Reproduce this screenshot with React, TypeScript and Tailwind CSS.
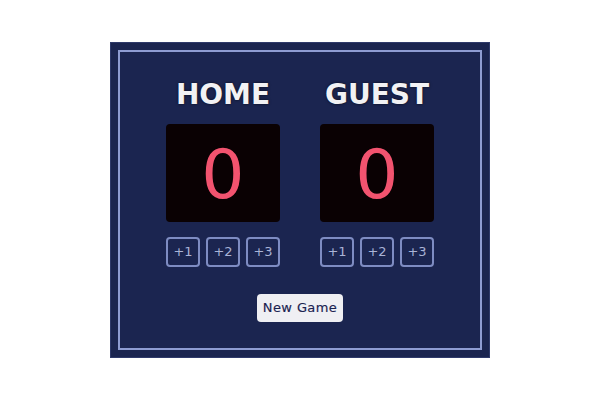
import { useState } from "react"

const font = { fontFamily: "'DejaVu Sans', Verdana, sans-serif" }

const Side = ({ label }: { label: string }) => {
  const [score, setScore] = useState(0)

  return (
    <div className="flex flex-col items-center w-[114px]">
      <h2 className="text-[28px] leading-[34px] font-bold text-[#f2f2f4] [text-shadow:0_0_3px_rgba(0,0,0,0.7)]">{ label }</h2>
      <div className="mt-[12px] w-[114px] h-[98px] rounded-[4px] bg-[#0a0103] flex items-center justify-center pt-[4px]">
        <span className="text-[68px] leading-none text-[#f2536f]">{ score }</span>
      </div>
      <div className="mt-[15px] flex flex-row gap-[6px]">
        { [1, 2, 3].map(n => (
          <button key={ n }
            className="w-[34px] h-[30px] rounded-[4px] border-2 border-[#7e8cc2] text-[13px] text-[#a9b3d6] flex items-center justify-center"
            onClick={ () => setScore(score + n) }
          >+{ n }</button>
        )) }
      </div>
    </div>
  )
}

export default function App() {
  return (
    <div className="w-[600px] h-[400px] bg-white flex items-center justify-center" style={ font }>
      <div className="w-[380px] h-[316px] bg-[#1b2550] border border-[#2f3a6a] p-[7px]">
        <div className="h-full border-2 border-[#8e9cd2] flex flex-col items-center pt-[26px]">
          <div className="flex flex-row gap-[40px]">
            <Side label="HOME" />
            <Side label="GUEST" />
          </div>
          <button className="mt-[27px] h-[28px] px-[6px] rounded-[4px] bg-[#efeff3] text-[13px] tracking-[0.4px] text-[#1a2250] [-webkit-text-stroke:0.15px_#1a2250]"
            onClick={ () => window.location.reload() }
          >New Game</button>
        </div>
      </div>
    </div>
  )
}
